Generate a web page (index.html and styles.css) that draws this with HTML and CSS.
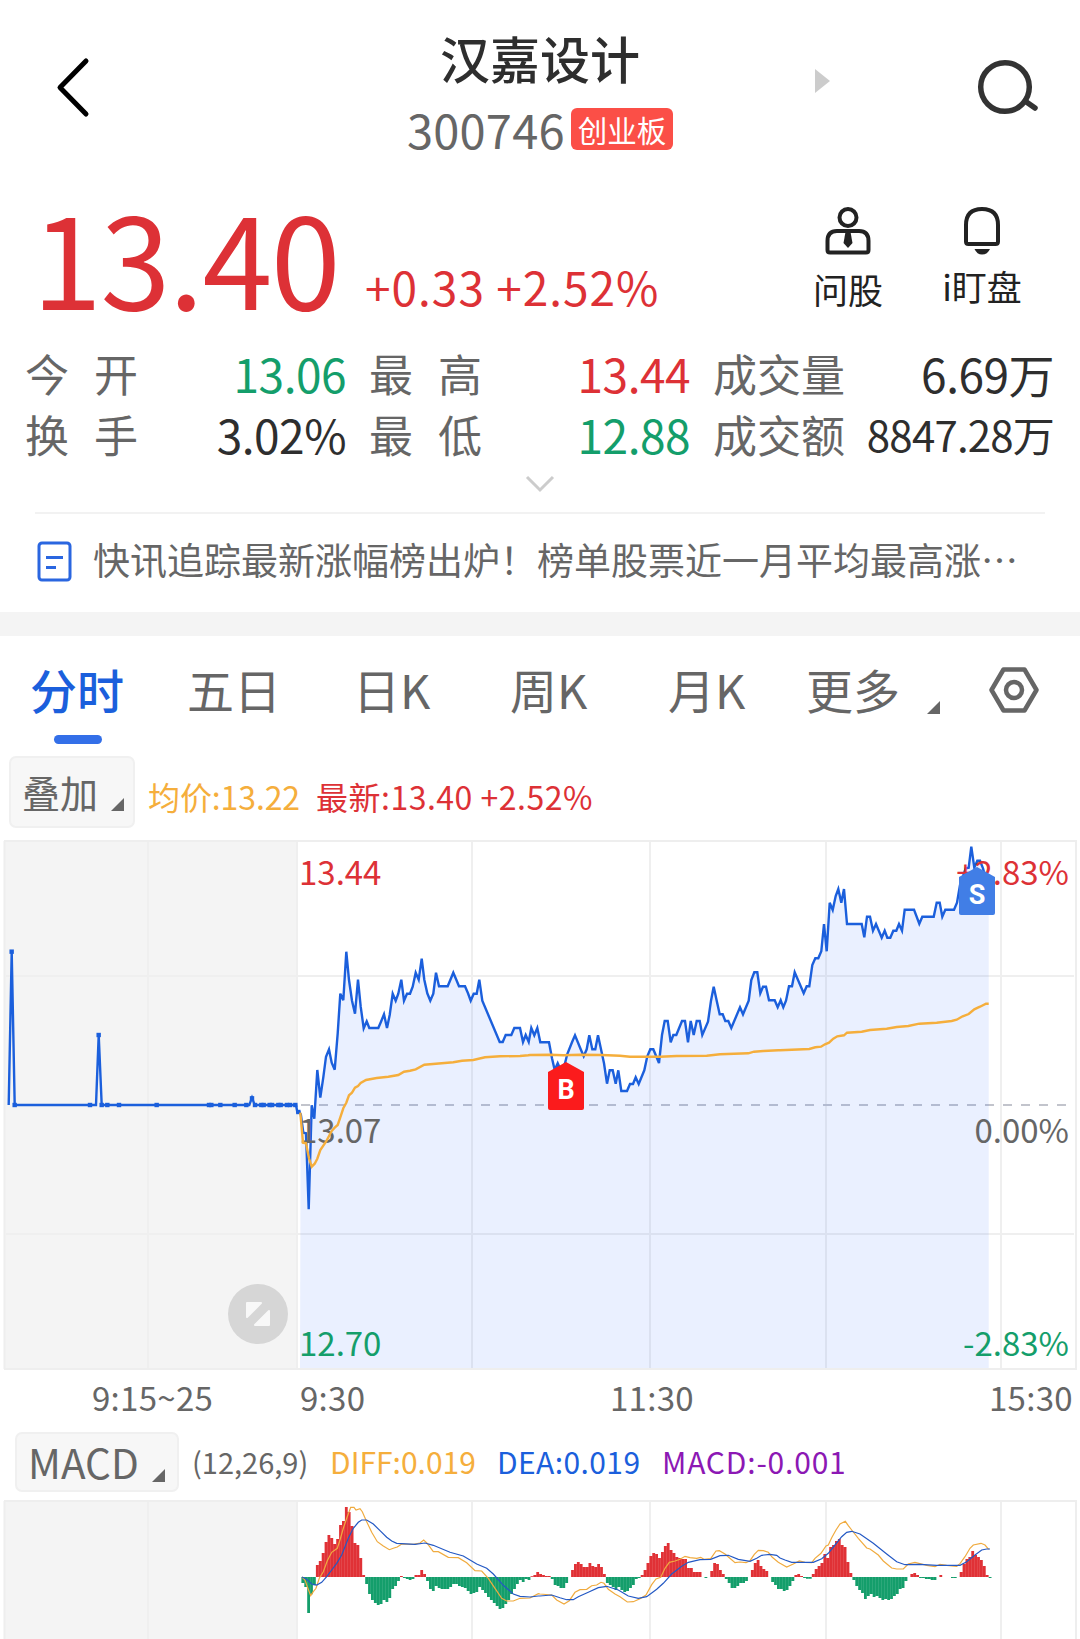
FILE: index.html
```
<!DOCTYPE html>
<html lang="zh-CN">
<head>
  <meta charset="UTF-8">
  <meta name="viewport" content="width=device-width, initial-scale=1.0">
  <title>汉嘉设计 300746</title>
  <link rel="stylesheet" href="styles.css">
</head>
<body>

  <header class="header">
    <div class="header__left">
      <svg class="icon-back" width="40" height="64" viewBox="0 0 40 64"><path d="M35 6 L9 32.500 L35 59"/></svg>
    </div>
    <div class="header__title">
      <h1>汉嘉设计</h1>
      <p><span class="code">300746</span><span class="board">创业板</span></p>
    </div>
    <div class="header__right">
      <svg class="icon-next" width="16" height="24" viewBox="0 0 16 24"><path d="M0 0 L15 12 L0 24z"/></svg>
      <svg class="icon-search" width="64" height="64" viewBox="0 0 64 64"><circle cx="29" cy="32" r="24.3"/><path d="M49 46 L59 53"/></svg>
    </div>
  </header>

  <section class="quote">
    <div class="quote__price">13.40</div>
    <div class="quote__change">+0.33 +2.52%</div>
    <div class="quote__tools">
      <a class="tool">
        <svg width="50" height="52" viewBox="0 0 50 52">
          <circle cx="25" cy="13.500" r="8.500"/>
          <path d="M4.500 45.500 V37 Q4.500 27 14 27 H36 Q45.500 27 45.500 37 V46 Q45.500 48.500 43 48.500 H7 Q4.500 48.500 4.500 46z"/>
          <path class="solid" d="M22.500 28 H27.500 L29.500 39 L25 44 L20.500 39z"/>
        </svg>
        <span>问股</span>
      </a>
      <a class="tool tool--watch">
        <svg width="50" height="52" viewBox="0 0 50 52">
          <path d="M9 38 V21 Q9 5 25 5 Q41 5 41 21 V37.500 Q41 40 38.500 40 H11.500 Q9 40 9 37.500z"/>
          <path class="solid" d="M17.500 45 H33 Q30.500 50.500 25 50.500 Q20 50.500 17.500 45z"/>
        </svg>
        <span>i盯盘</span>
      </a>
    </div>
  </section>

  <section class="stats">
    <div class="stat"><span class="wide">今开</span><b class="down">13.06</b></div>
    <div class="stat"><span class="wide">最高</span><b class="up">13.44</b></div>
    <div class="stat"><span>成交量</span><b class="amount">6.69万</b></div>
    <div class="stat"><span class="wide">换手</span><b>3.02%</b></div>
    <div class="stat"><span class="wide">最低</span><b class="down">12.88</b></div>
    <div class="stat"><span>成交额</span><b class="long">8847.28万</b></div>
  </section>
  <svg class="icon-more" width="32" height="20" viewBox="0 0 32 20"><path d="M3 3 L16 16 L29 3"/></svg>

  <a class="news">
    <svg width="36" height="42" viewBox="0 0 36 42"><rect x="2" y="2" width="31" height="37" rx="3"/><path d="M9 16.500 H26 M9 26.500 H19"/></svg>
    <span>快讯追踪最新涨幅榜出炉！榜单股票近一月平均最高涨…</span>
  </a>

  <nav class="tabs">
    <a class="tab tab--active">分时</a>
    <a class="tab tab--2">五日</a>
    <a class="tab tab--3">日K</a>
    <a class="tab tab--4">周K</a>
    <a class="tab tab--5">月K</a>
    <a class="tab tab--more">更多<i class="corner"></i></a>
    <svg class="icon-settings" width="52" height="50" viewBox="0 0 52 50"><path d="M15.500 4.500 H36.500 L48.500 25 L36.500 45.500 H15.500 L3.500 25z"/><circle cx="26" cy="25" r="8"/></svg>
  </nav>

  <div class="legend">
    <button class="pick">叠加<i class="corner"></i></button>
    <span class="avg">均价:13.22</span>
    <span class="up latest">最新:13.40 +2.52%</span>
  </div>

  <svg class="chart" width="1080" height="530" viewBox="0 840 1080 530">
    <rect class="auction" x="4" y="841" width="293" height="528"/>
    <path class="grid" d="M148 841V1369 M297 841V1369 M472 841V1369 M650 841V1369 M826 841V1369 M1001 841V1369 M6 976H1074 M6 1234H1074"/>
    <path class="frame" d="M4.500 841V1369 M1076 841V1369 M4 841H1077 M4 1369H1077"/>
    <path class="zero" d="M301 1105H1074"/>
    <path class="area" id="area"/>
    <g id="dots" class="dots"></g>
    <path class="price" id="auction"/>
    <path class="price" id="price"/>
    <g class="label">
      <text class="up" x="299" y="885">13.44</text>
      <text x="299" y="1143">13.07</text>
      <text class="down" x="299" y="1356">12.70</text>
      <text class="up end" x="1069" y="885">+2.83%</text>
      <text class="end" x="1069" y="1143">0.00%</text>
      <text class="down end" x="1069" y="1356">-2.83%</text>
    </g>
    <path class="average" id="average"/>
    <g class="mark mark--buy">
      <path d="M566 1062 L584 1072 V1108 Q584 1110 582 1110 H550 Q548 1110 548 1108 V1072z"/>
      <text x="566" y="1099">B</text>
    </g>
    <g class="mark mark--sell">
      <path d="M977 867 L995 877 V913 Q995 915 993 915 H961 Q959 915 959 913 V877z"/>
      <text x="977" y="904">S</text>
    </g>
    <g class="expand">
      <circle cx="258" cy="1314" r="30"/>
      <path d="M247 1303 H261 L247 1317z M269 1311 V1325 H255z"/>
    </g>
  </svg>

  <div class="axis">
    <span>9:15~25</span>
    <span>9:30</span>
    <span>11:30</span>
    <span>15:30</span>
  </div>

  <div class="legend legend--macd">
    <button class="pick">MACD<i class="corner"></i></button>
    <span class="params">(12,26,9)</span>
    <span class="avg diff">DIFF:0.019</span>
    <span class="dea">DEA:0.019</span>
    <span class="macd">MACD:-0.001</span>
  </div>

  <svg class="chart" width="1080" height="139" viewBox="0 1500 1080 139">
    <rect class="auction" x="4" y="1501" width="293" height="140"/>
    <path class="grid" d="M148 1501V1640 M297 1501V1640 M472 1501V1640 M650 1501V1640 M826 1501V1640 M1001 1501V1640"/>
    <path class="frame" d="M4.500 1501V1640 M1076 1501V1640 M4 1501H1077"/>
    <path class="bars-up" id="barsUp"/>
    <path class="bars-down" id="barsDown"/>
    <path class="line-diff" id="diff"/>
    <path class="line-dea" id="dea"/>
  </svg>

  <script src="chart.js"></script>
</body>
</html>
```
FILE: styles.css
```
* {
  box-sizing: border-box;
  margin: 0;
  padding: 0;
}

:root {
  --red: #dd3136;
  --green: #149e6b;
  --blue: #1b5fdc;
  --orange: #f5ae3c;
  --purple: #8c18b4;
  --text: #2e2e2e;
  --muted: #666;
  --line: #f0f0f0;
}

body {
  width: 1080px;
  height: 1639px;
  overflow: hidden;
  background: #fff;
  color: var(--text);
  font-family: "Noto Sans CJK SC", sans-serif;
}

svg {
  display: block;
  fill: none;
  flex: none;
}

.up { color: var(--red); fill: var(--red); }
.down { color: var(--green); fill: var(--green); }

/* Header */

.header {
  display: grid;
  grid-template-columns: 1fr 266px 1fr;
  height: 190px;
  padding-top: 28px;
}
.header__left { padding: 27px 0 0 51px; }
.icon-back {
  stroke: #000;
  stroke-width: 5;
  stroke-linecap: round;
  stroke-linejoin: round;
}
.header__title h1 {
  font-size: 50px;
  font-weight: 500;
  line-height: 58px;
  text-align: center;
}
.header__title p {
  display: flex;
  justify-content: space-between;
  align-items: center;
  margin-top: 21px;
  height: 43px;
}
.code {
  color: var(--muted);
  font-size: 47px;
  line-height: 48px;
  letter-spacing: 0.2px;
}
.board {
  width: 102px;
  height: 42px;
  border-radius: 6px;
  background: #fb4f47;
  color: #fff;
  font-size: 29.500px;
  line-height: 42px;
  text-align: center;
}
.header__right {
  display: flex;
  justify-content: space-between;
  padding: 27px 40px 0 142px;
}
.icon-next { fill: #ccc; margin-top: 14px; }
.icon-search {
  stroke: #333;
  stroke-width: 5.500;
  stroke-linecap: round;
}

/* Quote */

.quote {
  display: flex;
  height: 154px;
  padding-left: 32px;
  color: var(--red);
}
.quote__price {
  width: 333px;
  font-size: 126px;
  line-height: 130px;
  letter-spacing: -1.500px;
}
.quote__change {
  width: 445px;
  font-size: 46px;
  line-height: 60px;
  padding-top: 66px;
  letter-spacing: 1px;
}
.quote__tools {
  display: flex;
  gap: 50px;
  padding-top: 14px;
}
.tool {
  display: flex;
  flex-direction: column;
  align-items: center;
  width: 76px;
  color: #222;
}
.tool--watch { width: 92px; }
.tool svg {
  stroke: #222;
  stroke-width: 4;
  stroke-linejoin: round;
}
.tool .solid { fill: #222; stroke: none; }
.tool span {
  margin-top: 13px;
  font-size: 35px;
  line-height: 40px;
}
.tool--watch span { margin-top: 10px; }

/* Stats */

.stats {
  display: grid;
  grid-template-columns: 321px 321px 341px;
  column-gap: 23px;
  grid-auto-rows: 61px;
  padding-left: 25px;
}
.stat {
  display: flex;
  justify-content: space-between;
  color: var(--muted);
  font-size: 44px;
  line-height: 58px;
}
.stat .wide { letter-spacing: 25px; }
.stat b {
  font-weight: 400;
  font-size: 46px;
  letter-spacing: -0.5px;
  color: var(--text);
}
.stat b.up { color: var(--red); }
.stat b.down { color: var(--green); }
.stat b.amount { font-size: 46px; }
.stat b.long { font-size: 42px; letter-spacing: -0.8px; }
.icon-more {
  margin: 8px auto 0;
  stroke: #ccc;
  stroke-width: 3;
}

/* News */

.news {
  display: flex;
  align-items: center;
  margin: 18px 35px 0;
  border-top: 2px solid #f2f2f2;
  height: 100px;
  padding: 0 0 2px 2px;
  color: var(--muted);
  font-size: 37px;
  line-height: 54px;
  white-space: nowrap;
}
.news span { padding-bottom: 6px; }
.news svg {
  margin-right: 20px;
  stroke: #2a66e0;
  stroke-width: 3;
}

/* Tabs */

.tabs {
  display: flex;
  height: 144px;
  border-top: 24px solid #f4f4f4;
  padding-left: 30px;
  color: var(--muted);
  font-size: 47px;
  line-height: 66px;
}
.tab { padding-top: 20px; }
.tab--active {
  width: 157px;
  color: var(--blue);
  font-weight: 500;
}
.tab--active::after {
  content: "";
  display: block;
  width: 48px;
  height: 9px;
  margin: 13px 0 0 24px;
  border-radius: 5px;
  background: #336fe8;
}
.tab--2 { width: 166px; }
.tab--3 { width: 157px; }
.tab--4 { width: 158px; }
.tab--5 { width: 138px; }
.tab--more { width: 182px; }
.corner {
  display: inline-block;
  vertical-align: -3px;
  border-style: solid;
  border-width: 0 0 13px 13px;
  border-color: transparent transparent var(--muted);
}
.tab--more .corner { margin-left: 27px; vertical-align: -5px; }
.icon-settings {
  margin-top: 29px;
  stroke: var(--muted);
  stroke-width: 4.5;
  stroke-linejoin: round;
}

/* Chart legends */

.legend {
  display: flex;
  height: 84px;
  padding-left: 9px;
  font-size: 32px;
  line-height: 80px;
  white-space: pre;
}
.pick {
  width: 126px;
  height: 72px;
  padding-left: 11px;
  border: 2px solid var(--line);
  border-radius: 7px;
  background: #f7f7f7;
  color: var(--muted);
  font: 38px/68px "Noto Sans CJK SC", sans-serif;
  text-align: left;
}
.pick .corner { margin-left: 13px; }
.avg { color: var(--orange); }
.legend .avg { width: 168px; margin-left: 13px; letter-spacing: -0.1px; }
.latest { letter-spacing: 0.5px; }

.legend--macd {
  height: 68px;
  padding-left: 15px;
  font-size: 30px;
  line-height: 58px;
}
.legend--macd .pick {
  width: 164px;
  height: 60px;
  font-size: 40.500px;
  line-height: 52px;
}
.params {
  width: 138px;
  margin-left: 13px;
  color: var(--muted);
  font-size: 29px;
}
.legend--macd .diff { width: 167px; margin-left: 0; letter-spacing: 0; }
.dea { width: 165px; color: var(--blue); letter-spacing: 0.4px; }
.macd { color: var(--purple); letter-spacing: 0.8px; }

/* Charts */

.auction { fill: #f4f4f4; }
.grid { stroke: #efefef; stroke-width: 2; }
.frame { stroke: #eee; stroke-width: 2; }
.zero { stroke: #c2c4cc; stroke-width: 2; stroke-dasharray: 9 9; }
.area { fill: rgba(45, 108, 255, 0.1); }
.price { stroke: var(--blue); stroke-width: 2.4; }
.dots { fill: var(--blue); }
.average { stroke: var(--orange); stroke-width: 2.4; }
.label {
  fill: var(--muted);
  font-size: 33px;
}
.end { text-anchor: end; }
.mark text {
  fill: #fff;
  font-family: Roboto, sans-serif;
  font-size: 27px;
  font-weight: 700;
  text-anchor: middle;
}
.mark--buy { fill: #fb1b1c; }
.mark--sell { fill: #417ee6; }
.expand circle { fill: #d6d6d6; }
.expand path {
  fill: #f8f8f8;
  stroke: #f8f8f8;
  stroke-width: 2;
  stroke-linejoin: round;
}
.bars-up { fill: #e03136; }
.bars-down { fill: #149e6b; }
.line-diff { stroke: #f0ab3f; stroke-width: 1.2; }
.line-dea { stroke: #2459c4; stroke-width: 1.2; }

.axis {
  display: grid;
  grid-template-columns: 208px 310px 379px auto;
  height: 62px;
  padding-left: 92px;
  color: var(--muted);
  font-size: 33px;
  line-height: 54px;
  letter-spacing: 0.3px;
}
```
FILE: chart.js
```
// Points are kept in thirds of a pixel, relative to the origin of their segment
const toPoints = function(segments) {
  const out = [];
  segments.forEach(function(s) {
    s.d.trim().split(/\s+/).forEach(function(p) {
      const xy = p.split(',');
      out.push([s.x + xy[0] / 3, s.y + xy[1] / 3]);
    });
  });
  return out;
}
const toPath = function(points) {
  return 'M' + points.map(p => p[0].toFixed(1) + ' ' + p[1].toFixed(1)).join('L');
}
const draw = function(id, d) {
  document.getElementById(id).setAttribute('d', d);
}

const price = toPoints([
  { x: 280, y: 830, d: `62,850 70,908 78,910 86,1138 95,826 103,866 112,720 121,803 130,742 138,680 147,658 155,698 164,719 173,610
    181,491 190,511 199,365 207,450 216,512 225,551 234,449 242,530 251,595 260,574 268,594 295,594 303,575 312,553 321,594 329,555
    338,491 347,512 355,491 364,449 372,512 381,491 390,491 398,470 407,428 416,449 425,386 433,449 442,490 451,512 460,491 468,428
    477,469 503,469 511,450 520,428 529,449 537,469 555,469 564,490 572,512 581,491 590,491 598,449 607,512 659,636 668,636 677,615
    694,615 703,594 720,594 729,636 737,615 746,636` },
  { x: 530, y: 900, d: `4,384 13,406 22,384 31,427 57,427 66,475 74,510 83,490 92,510 105,490 112,462 126,427 135,406 152,448 161,469
    170,448 178,406 187,448 196,448 204,406 213,448 222,490 231,551 239,511 248,511 257,551 265,511 274,573 291,573 300,552 309,552
    317,532 326,552 343,511 352,469 361,448 370,448 387,489 396,405 404,363 413,363 422,427 430,405 439,405 456,363 465,363 474,427
    482,363 491,405 500,363 509,363 517,405 534,365 543,302 551,260 560,302 569,343 578,343 586,363 595,363 604,384 630,322 639,343
    656,302 664,240 673,217 682,217 691,280 699,260 708,260 717,301 734,301 743,322` },
  { x: 780, y: 830, d: `2,511 10,532 18,512 27,469 36,469 44,427 71,490 80,469 88,469 97,405 106,385 115,385 124,364 132,282 140,364
    149,218 158,240 167,198 175,177 184,218 192,177 201,282 245,282 253,322 261,260 270,260 279,302 288,282 305,323 314,302 322,323
    331,323 340,302 349,302 357,282 366,302 374,239 402,239 418,281 427,260 461,260 470,218 479,218 487,260 496,239 522,239 531,218
    540,165 557,115 566,113 574,50 583,113 592,92 600,92 609,115 618,150 626,175` }
]);
draw('price', toPath(price));
draw('area', toPath(price) + 'V1368H300Z');

draw('average', toPath(toPoints([
  { x: 280, y: 830, d: `61,848 69,938 78,940 87,985 95,1010 104,1001 112,986 121,960 138,935 155,903 164,893 173,885 181,862 190,835
    199,818 207,796 216,788 225,773 234,768 242,759 258,750 290,744 325,740 355,735 372,725 390,722 407,718 433,704 520,697 546,692
    580,690 615,682 660,679 720,678 745,676` },
  { x: 530, y: 900, d: '0,465 60,464 100,466 150,464 215,465 270,467 300,470 390,470 440,468 530,467 570,463 655,460 672,455 700,453 745,451' },
  { x: 780, y: 830, d: `0,661 88,657 106,652 123,650 135,643 147,638 160,626 172,619 192,616 201,608 245,605 270,600 320,596 350,591
    385,588 418,581 470,578 515,573 530,569 548,559 566,552 583,538 600,530 618,521 626,521` }
])));

// Call auction
draw('auction', toPath(toPoints([
  { x: 0, y: 920, d: '26,555 35,95 44,555 288,555 296,345 305,555 748,555 756,533 764,555 888,555 892,576 902,578' }
])));
const dots = toPoints([
  { x: 0, y: 920, d: `35,95 44,555 270,555 296,345 305,555 322,555 357,555 470,555 627,555 634,555 661,555 704,555 739,555 756,535
    765,555 784,555 791,555 809,555 816,555 835,555 842,555 861,555 870,555 886,555 895,576` }
]);
document.getElementById('dots').innerHTML = dots.map(function(p) {
  return '<rect x="' + (p[0] - 2.2) + '" y="' + (p[1] - 2.2) + '" width="4.4" height="4.4"/>';
}).join('');

// MACD histogram, one bar a minute
const bars = [
  -18, -30, -108, -52, -25, 36, 48, 72, 105, 126, 117, 99, 114, 156, 168, 210, 195, 153, 102, 96,
  57, 6, -21, -51, -69, -78, -84, -81, -69, -75, -63, -36, -27, -12, 3, -3, -6, -9, -6, 6,
  6, 21, 9, -12, -36, -42, -27, -33, -36, -36, -36, -30, -21, -21, -27, -30, -33, -42, -51, -48,
  -45, -30, -39, -48, -60, -69, -78, -87, -96, -93, -81, -69, -51, -36, -21, -9, -15, -6, -9, 2,
  6, 15, 9, 6, 3, 3, -6, -24, -27, -33, -33, -18, 0, 21, 39, 45, 39, 30, 30, 42,
  33, 30, 39, 30, 9, -18, -24, -30, -39, -30, -39, -45, -42, -33, -24, -6, -3, 6, 21, 42,
  63, 72, 69, 57, 75, 93, 102, 81, 72, 60, 57, 54, 54, 27, 27, 15, 15, 15, 0, -3,
  0, 18, 42, 39, 21, 9, -6, -18, -33, -33, -27, -18, -18, -12, 0, 21, 42, 51, 33, 24,
  18, 0, -15, -24, -36, -36, -42, -39, -27, -12, 6, 9, 3, -3, -5, -5, 9, 24, 33, 42,
  69, 57, 90, 96, 108, 114, 96, 90, 45, 12, -9, -27, -39, -48, -66, -57, -51, -60, -57, -63,
  -69, -66, -69, -66, -57, -51, -36, -33, -12, 0, 9, 12, 6, -3, -3, -6, -6, -9, -9, 0,
  6, 0, 0, 0, -3, -3, 0, 15, 39, 54, 60, 78, 66, 60, 51, 33, 6, -3
];
const barPath = function(sign) {
  let d = '';
  bars.forEach(function(v, i) {
    if (v * sign > 0) {
      d += 'M' + (301.4 + i * 2.9).toFixed(1) + ' 1577h2.8v' + (-v / 3).toFixed(1) + 'h-2.8z';
    }
  });
  return d;
}
draw('barsUp', barPath(1));
draw('barsDown', barPath(-1));

draw('diff', toPath(toPoints([
  { x: 290, y: 1490, d: `36,261 45,270 52,290 62,317 70,305 78,295 88,265 100,245 112,212 125,187 142,175 150,150 160,115 170,85 182,52
    192,52 198,60 210,56 217,65 230,95 245,127 262,155 280,168 298,179 312,174 322,171 335,162 370,163 390,159 401,150 412,160
    430,185 445,185 475,202 505,203 530,218 555,242 575,243 595,265 615,295 635,325 650,333 670,333 690,325 720,324 745,311` },
  { x: 540, y: 1490, d: `0,312 35,315 50,330 72,342 88,332 105,307 120,299 140,298 155,287 170,285 183,277 192,280 205,298 225,312
    240,320 262,336 280,335 300,326 318,315 335,284 348,267 362,262 375,235 388,217 405,213 420,208 435,199 450,203 470,205 482,202
    492,208 512,206 528,183 538,182 555,192 568,203 585,218 600,216 618,218 630,212 643,193 655,181 670,182 685,187 697,202 715,217` },
  { x: 780, y: 1490, d: `0,220 20,231 40,222 58,213 75,217 95,218 105,205 123,190 138,168 145,165 155,143 168,120 180,102 196,94 205,107
    215,120 235,145 260,174 270,177 295,195 310,213 335,234 350,237 370,237 385,222 405,217 440,226 465,230 480,223 500,226 530,229
    540,221 555,200 570,175 580,165 603,160 615,165 626,178` }
])));
draw('dea', toPath(toPoints([
  { x: 290, y: 1490, d: `36,261 50,268 65,282 80,285 95,277 110,260 125,240 140,220 155,195 165,170 175,145 190,115 205,97 215,90 230,90
    250,102 270,122 290,142 305,153 320,160 375,163 405,159 430,166 480,187 520,198 560,222 590,235 610,252 640,286 670,312 690,319
    720,321 745,318` },
  { x: 540, y: 1490, d: `0,318 35,315 60,323 80,329 100,329 115,320 145,307 175,293 200,289 235,300 265,318 295,325 320,320 350,298
    370,280 395,252 425,229 445,217 480,209 512,208 540,197 565,196 595,208 630,214 650,205 665,196 690,193 710,196` },
  { x: 780, y: 1490, d: `0,204 15,210 35,217 100,217 125,206 145,190 165,165 185,140 200,127 215,124 240,132 280,160 320,192 350,215
    375,224 420,223 470,226 540,226 560,215 585,195 605,180 620,177 630,177` }
])));
```
